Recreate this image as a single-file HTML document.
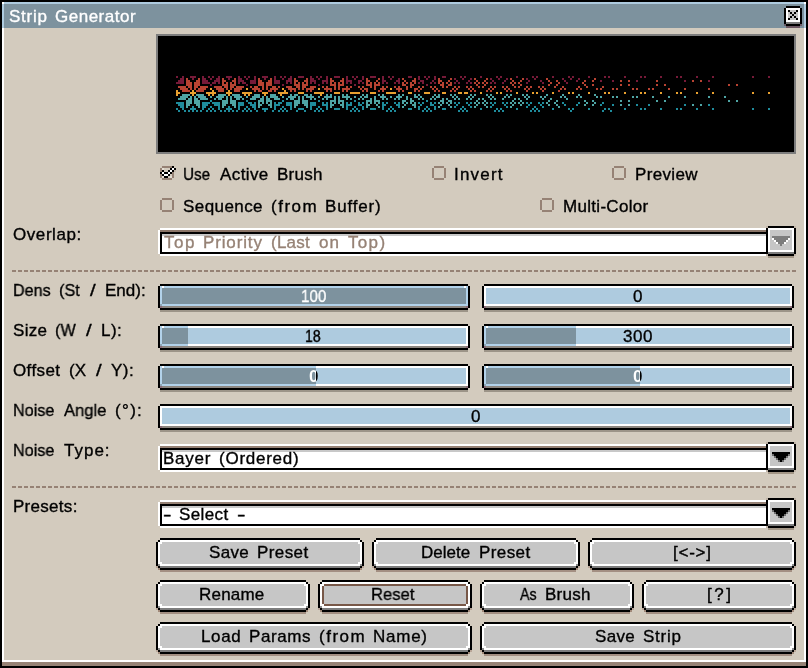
<!DOCTYPE html>
<html lang="en"><head><meta charset="utf-8"><title>Strip Generator</title>
<style>
html,body{margin:0;padding:0;background:#000;width:808px;height:668px;overflow:hidden}
#w{position:relative;width:808px;height:668px;background:#000;overflow:hidden;font-family:"Liberation Sans",sans-serif;font-size:17px;line-height:20px;font-weight:normal}
#w i{position:absolute;display:block}
#w .t,#w .t b{position:absolute;white-space:pre;display:block;font-weight:inherit;transform-origin:0 0;-webkit-text-stroke:0.35px;will-change:transform}
#w .split{color:transparent;-webkit-background-clip:text;background-clip:text;-webkit-text-stroke:0;font-weight:bold}
#w svg.strip{position:absolute;left:0;top:0}
#w .clip{position:absolute;overflow:hidden}
#w .sep{background:repeating-linear-gradient(90deg,#968275 0,#968275 4px,transparent 4px,transparent 6px)}
</style></head>
<body><div id="w">
<i style="left:2px;top:2px;width:804px;height:2px;background:#aecbdf"></i><i style="left:2px;top:4px;width:2px;height:24px;background:#aecbdf"></i><i style="left:804px;top:4px;width:2px;height:24px;background:#aecbdf"></i><i style="left:2px;top:2px;width:2px;height:2px;background:#fff"></i><i style="left:804px;top:2px;width:2px;height:2px;background:#fff"></i><i style="left:4px;top:4px;width:800px;height:24px;background:#7d929e"></i><i style="left:2px;top:28px;width:804px;height:634px;background:#fff"></i><i style="left:4px;top:28px;width:800px;height:632px;background:#d3cbbe"></i><i style="left:2px;top:662px;width:804px;height:4px;background:#968275"></i><div class="titlebar"><span class="t " style="left:0;top:0;color:#fff"><b style="left:9.00px;top:7px;letter-spacing:0.750px">Strip</b> <b style="left:55.00px;top:7px;letter-spacing:0.500px">Generator</b></span><i style="left:786px;top:6px;width:14px;height:2px;background:#000"></i><i style="left:784px;top:8px;width:2px;height:16px;background:#000"></i><i style="left:800px;top:8px;width:2px;height:16px;background:#000"></i><i style="left:786px;top:24px;width:14px;height:2px;background:#000"></i><i style="left:784px;top:24px;width:2px;height:2px;background:#6d5d68"></i><i style="left:800px;top:24px;width:2px;height:2px;background:#6d5d68"></i><i style="left:786px;top:26px;width:14px;height:2px;background:#6a5560"></i><i style="left:786px;top:8px;width:14px;height:14px;background:#fff"></i><i style="left:788px;top:10px;width:10px;height:10px;background:#c6c6c6"></i><i style="left:786px;top:22px;width:14px;height:2px;background:#7d7d7d"></i><i style="left:788px;top:10px;width:2px;height:2px;background:#000"></i><i style="left:796px;top:10px;width:2px;height:2px;background:#000"></i><i style="left:790px;top:12px;width:2px;height:2px;background:#000"></i><i style="left:794px;top:12px;width:2px;height:2px;background:#000"></i><i style="left:792px;top:14px;width:2px;height:2px;background:#000"></i><i style="left:794px;top:16px;width:2px;height:2px;background:#000"></i><i style="left:790px;top:16px;width:2px;height:2px;background:#000"></i><i style="left:796px;top:18px;width:2px;height:2px;background:#000"></i><i style="left:788px;top:18px;width:2px;height:2px;background:#000"></i></div><div class="preview"><i style="left:156px;top:34px;width:640px;height:120px;background:#7d7d7d"></i><i style="left:158px;top:36px;width:636px;height:116px;background:#000"></i><svg class="strip" width="808" height="668" viewBox="0 0 808 668" shape-rendering="crispEdges"><path fill="#761a38" d="M176 76h2v2h-2zM182 76h2v2h-2zM190 76h6v2h-6zM202 76h2v2h-2zM208 76h2v2h-2zM212 76h2v2h-2zM218 76h2v2h-2zM226 76h6v2h-6zM238 76h2v2h-2zM244 76h2v2h-2zM248 76h2v2h-2zM254 76h2v2h-2zM262 76h6v2h-6zM274 76h2v2h-2zM280 76h2v2h-2zM284 76h2v2h-2zM290 76h2v2h-2zM298 76h6v2h-6zM310 76h2v2h-2zM316 76h2v2h-2zM320 76h2v2h-2zM326 76h2v2h-2zM334 76h6v2h-6zM346 76h2v2h-2zM352 76h2v2h-2zM356 76h2v2h-2zM362 76h2v2h-2zM370 76h6v2h-6zM382 76h2v2h-2zM388 76h2v2h-2zM392 76h2v2h-2zM408 76h4v2h-4zM418 76h2v2h-2zM424 76h2v2h-2zM428 76h2v2h-2zM434 76h2v2h-2zM442 76h4v2h-4zM460 76h2v2h-2zM464 76h2v2h-2zM480 76h2v2h-2zM496 76h2v2h-2zM500 76h2v2h-2zM516 76h2v2h-2zM532 76h2v2h-2zM536 76h2v2h-2zM552 76h2v2h-2zM568 76h2v2h-2zM572 76h2v2h-2zM588 76h2v2h-2zM604 76h2v2h-2zM608 76h2v2h-2zM624 76h2v2h-2zM640 76h2v2h-2zM644 76h2v2h-2zM660 76h2v2h-2zM676 76h2v2h-2zM680 76h2v2h-2zM696 76h2v2h-2zM712 76h2v2h-2zM752 76h2v2h-2zM768 76h2v2h-2zM180 78h4v2h-4zM192 78h2v2h-2zM202 78h4v2h-4zM210 78h2v2h-2zM216 78h4v2h-4zM228 78h2v2h-2zM238 78h4v2h-4zM246 78h2v2h-2zM254 78h2v2h-2zM264 78h2v2h-2zM274 78h2v2h-2zM282 78h2v2h-2zM288 78h4v2h-4zM310 78h4v2h-4zM318 78h2v2h-2zM326 78h2v2h-2zM346 78h2v2h-2zM354 78h2v2h-2zM362 78h2v2h-2zM382 78h2v2h-2zM390 78h2v2h-2zM398 78h2v2h-2zM418 78h2v2h-2zM426 78h2v2h-2zM434 78h2v2h-2zM454 78h2v2h-2zM462 78h2v2h-2zM470 78h2v2h-2zM490 78h2v2h-2zM498 78h2v2h-2zM506 78h2v2h-2zM526 78h2v2h-2zM534 78h2v2h-2zM562 78h2v2h-2zM570 78h2v2h-2zM578 78h2v2h-2zM178 80h6v2h-6zM202 80h6v2h-6zM214 80h6v2h-6zM238 80h6v2h-6zM250 80h6v2h-6zM274 80h6v2h-6zM286 80h6v2h-6zM310 80h6v2h-6zM322 80h6v2h-6zM346 80h6v2h-6zM358 80h4v2h-4zM382 80h4v2h-4zM396 80h4v2h-4zM420 80h4v2h-4zM432 80h2v2h-2zM456 80h2v2h-2zM468 80h2v2h-2zM492 80h2v2h-2zM504 80h2v2h-2zM528 80h2v2h-2zM540 80h2v2h-2zM564 80h2v2h-2zM576 80h2v2h-2zM600 80h2v2h-2zM612 80h2v2h-2zM636 80h2v2h-2zM684 80h2v2h-2zM708 80h2v2h-2zM176 82h8v2h-8zM202 82h8v2h-8zM212 82h4v2h-4zM218 82h2v2h-2zM238 82h2v2h-2zM242 82h4v2h-4zM250 82h6v2h-6zM274 82h6v2h-6zM286 82h2v2h-2zM290 82h2v2h-2zM310 82h2v2h-2zM314 82h2v2h-2zM322 82h2v2h-2zM326 82h2v2h-2zM346 82h2v2h-2zM350 82h2v2h-2zM358 82h2v2h-2zM362 82h2v2h-2zM382 82h2v2h-2zM386 82h2v2h-2zM394 82h2v2h-2zM398 82h2v2h-2zM418 82h2v2h-2zM422 82h2v2h-2zM430 82h2v2h-2zM434 82h2v2h-2zM454 82h2v2h-2zM458 82h2v2h-2zM466 82h2v2h-2zM470 82h2v2h-2zM490 82h2v2h-2zM494 82h2v2h-2zM502 82h2v2h-2zM526 82h2v2h-2zM542 82h2v2h-2zM566 82h2v2h-2zM210 84h2v2h-2zM246 84h2v2h-2zM282 84h2v2h-2zM318 84h2v2h-2zM354 84h2v2h-2zM426 84h2v2h-2z"/><path fill="#b84332" d="M186 78h2v2h-2zM198 78h2v2h-2zM222 78h2v2h-2zM234 78h2v2h-2zM258 78h2v2h-2zM270 78h2v2h-2zM294 78h2v2h-2zM306 78h2v2h-2zM330 78h2v2h-2zM342 78h2v2h-2zM366 78h2v2h-2zM378 78h2v2h-2zM402 78h2v2h-2zM414 78h2v2h-2zM438 78h2v2h-2zM450 78h2v2h-2zM474 78h2v2h-2zM486 78h2v2h-2zM510 78h2v2h-2zM522 78h2v2h-2zM546 78h2v2h-2zM594 78h2v2h-2zM186 80h4v2h-4zM196 80h4v2h-4zM222 80h4v2h-4zM232 80h4v2h-4zM258 80h4v2h-4zM268 80h4v2h-4zM294 80h4v2h-4zM304 80h4v2h-4zM330 80h4v2h-4zM340 80h4v2h-4zM366 80h4v2h-4zM376 80h2v2h-2zM404 80h2v2h-2zM412 80h4v2h-4zM438 80h4v2h-4zM448 80h2v2h-2zM476 80h2v2h-2zM484 80h2v2h-2zM512 80h2v2h-2zM520 80h2v2h-2zM548 80h2v2h-2zM556 80h2v2h-2zM584 80h2v2h-2zM592 80h2v2h-2zM620 80h2v2h-2zM628 80h2v2h-2zM656 80h2v2h-2zM692 80h2v2h-2zM700 80h2v2h-2zM186 82h6v2h-6zM194 82h6v2h-6zM222 82h2v2h-2zM226 82h2v2h-2zM230 82h2v2h-2zM234 82h2v2h-2zM258 82h6v2h-6zM266 82h6v2h-6zM294 82h2v2h-2zM298 82h2v2h-2zM302 82h2v2h-2zM306 82h2v2h-2zM330 82h2v2h-2zM334 82h2v2h-2zM338 82h2v2h-2zM342 82h2v2h-2zM366 82h2v2h-2zM370 82h2v2h-2zM374 82h2v2h-2zM378 82h2v2h-2zM402 82h2v2h-2zM406 82h2v2h-2zM410 82h2v2h-2zM414 82h2v2h-2zM438 82h2v2h-2zM442 82h2v2h-2zM446 82h2v2h-2zM450 82h2v2h-2zM474 82h2v2h-2zM478 82h2v2h-2zM482 82h2v2h-2zM486 82h2v2h-2zM510 82h2v2h-2zM514 82h2v2h-2zM518 82h2v2h-2zM550 82h2v2h-2zM558 82h2v2h-2zM582 82h2v2h-2zM186 84h6v2h-6zM194 84h6v2h-6zM222 84h6v2h-6zM230 84h6v2h-6zM258 84h6v2h-6zM266 84h6v2h-6zM294 84h6v2h-6zM302 84h6v2h-6zM330 84h6v2h-6zM338 84h6v2h-6zM366 84h6v2h-6zM374 84h6v2h-6zM402 84h4v2h-4zM410 84h4v2h-4zM440 84h4v2h-4zM448 84h4v2h-4zM476 84h2v2h-2zM484 84h2v2h-2zM512 84h2v2h-2zM520 84h2v2h-2zM548 84h2v2h-2zM556 84h2v2h-2zM584 84h2v2h-2zM592 84h2v2h-2zM620 84h2v2h-2zM628 84h2v2h-2zM656 84h2v2h-2zM664 84h2v2h-2zM728 84h2v2h-2zM736 84h2v2h-2zM178 86h8v2h-8zM188 86h4v2h-4zM194 86h4v2h-4zM200 86h8v2h-8zM214 86h8v2h-8zM224 86h4v2h-4zM230 86h4v2h-4zM236 86h8v2h-8zM250 86h2v2h-2zM254 86h4v2h-4zM262 86h2v2h-2zM266 86h2v2h-2zM272 86h4v2h-4zM278 86h2v2h-2zM286 86h6v2h-6zM296 86h4v2h-4zM302 86h4v2h-4zM310 86h6v2h-6zM322 86h2v2h-2zM326 86h2v2h-2zM334 86h2v2h-2zM338 86h2v2h-2zM346 86h2v2h-2zM350 86h2v2h-2zM358 86h2v2h-2zM362 86h2v2h-2zM370 86h2v2h-2zM374 86h2v2h-2zM382 86h2v2h-2zM386 86h2v2h-2zM394 86h2v2h-2zM398 86h2v2h-2zM406 86h2v2h-2zM410 86h2v2h-2zM418 86h2v2h-2zM422 86h2v2h-2zM430 86h2v2h-2zM434 86h2v2h-2zM442 86h2v2h-2zM446 86h2v2h-2zM454 86h2v2h-2zM458 86h2v2h-2zM466 86h2v2h-2zM470 86h2v2h-2zM478 86h2v2h-2zM482 86h2v2h-2zM490 86h2v2h-2zM494 86h2v2h-2zM502 86h2v2h-2zM506 86h2v2h-2zM514 86h2v2h-2zM518 86h2v2h-2zM526 86h2v2h-2zM530 86h2v2h-2zM538 86h2v2h-2zM542 86h2v2h-2zM554 86h2v2h-2zM562 86h2v2h-2zM578 86h2v2h-2zM586 86h2v2h-2zM602 86h2v2h-2zM180 88h8v2h-8zM190 88h2v2h-2zM194 88h2v2h-2zM198 88h8v2h-8zM216 88h8v2h-8zM226 88h2v2h-2zM230 88h2v2h-2zM234 88h8v2h-8zM252 88h8v2h-8zM262 88h2v2h-2zM266 88h2v2h-2zM270 88h8v2h-8zM288 88h8v2h-8zM298 88h2v2h-2zM302 88h2v2h-2zM306 88h8v2h-8zM324 88h8v2h-8zM334 88h2v2h-2zM338 88h2v2h-2zM342 88h8v2h-8zM360 88h2v2h-2zM364 88h4v2h-4zM374 88h2v2h-2zM380 88h6v2h-6zM396 88h6v2h-6zM406 88h2v2h-2zM414 88h4v2h-4zM420 88h2v2h-2zM432 88h2v2h-2zM436 88h2v2h-2zM452 88h2v2h-2zM456 88h2v2h-2zM468 88h2v2h-2zM472 88h2v2h-2zM488 88h2v2h-2zM492 88h2v2h-2zM504 88h2v2h-2zM508 88h2v2h-2zM524 88h2v2h-2zM528 88h2v2h-2zM540 88h2v2h-2zM544 88h2v2h-2zM560 88h2v2h-2zM564 88h2v2h-2zM576 88h2v2h-2zM580 88h2v2h-2zM596 88h2v2h-2zM600 88h2v2h-2zM612 88h2v2h-2zM616 88h2v2h-2zM632 88h2v2h-2zM636 88h2v2h-2zM648 88h2v2h-2zM652 88h2v2h-2zM668 88h2v2h-2zM684 88h2v2h-2zM708 88h2v2h-2zM182 90h8v2h-8zM196 90h8v2h-8zM218 90h6v2h-6zM234 90h6v2h-6zM254 90h2v2h-2zM258 90h4v2h-4zM268 90h4v2h-4zM274 90h2v2h-2zM290 90h2v2h-2zM294 90h2v2h-2zM306 90h2v2h-2zM310 90h2v2h-2zM326 90h2v2h-2zM330 90h2v2h-2zM342 90h2v2h-2zM346 90h2v2h-2zM362 90h2v2h-2zM366 90h2v2h-2zM378 90h2v2h-2zM382 90h2v2h-2zM398 90h2v2h-2zM402 90h2v2h-2zM414 90h2v2h-2zM418 90h2v2h-2zM434 90h2v2h-2zM438 90h2v2h-2zM450 90h2v2h-2zM454 90h2v2h-2zM470 90h2v2h-2zM474 90h2v2h-2zM486 90h2v2h-2zM490 90h2v2h-2zM506 90h2v2h-2zM510 90h2v2h-2zM526 90h2v2h-2zM542 90h2v2h-2zM558 90h2v2h-2z"/><path fill="#e8a030" d="M210 88h2v2h-2zM246 88h2v2h-2zM282 88h2v2h-2zM318 88h2v2h-2zM390 88h2v2h-2zM176 90h2v2h-2zM192 90h2v2h-2zM212 90h2v2h-2zM228 90h2v2h-2zM284 90h2v2h-2zM176 92h4v2h-4zM190 92h6v2h-6zM206 92h10v2h-10zM226 92h6v2h-6zM242 92h10v2h-10zM262 92h6v2h-6zM278 92h10v2h-10zM298 92h6v2h-6zM314 92h10v2h-10zM334 92h6v2h-6zM350 92h10v2h-10zM370 92h6v2h-6zM386 92h10v2h-10zM408 92h4v2h-4zM424 92h6v2h-6zM442 92h4v2h-4zM458 92h4v2h-4zM464 92h4v2h-4zM480 92h2v2h-2zM496 92h2v2h-2zM500 92h2v2h-2zM516 92h2v2h-2zM532 92h2v2h-2zM536 92h2v2h-2zM552 92h2v2h-2zM568 92h2v2h-2zM572 92h2v2h-2zM588 92h2v2h-2zM604 92h2v2h-2zM608 92h2v2h-2zM624 92h2v2h-2zM640 92h2v2h-2zM644 92h2v2h-2zM660 92h2v2h-2zM676 92h2v2h-2zM680 92h2v2h-2zM696 92h2v2h-2zM712 92h2v2h-2zM752 92h2v2h-2zM768 92h2v2h-2zM176 94h2v2h-2zM192 94h2v2h-2zM208 94h2v2h-2zM212 94h2v2h-2zM228 94h2v2h-2zM244 94h2v2h-2zM248 94h2v2h-2zM264 94h2v2h-2zM280 94h2v2h-2zM320 94h2v2h-2z"/><path fill="#4fa5a5" d="M182 94h8v2h-8zM196 94h8v2h-8zM218 94h8v2h-8zM232 94h8v2h-8zM254 94h6v2h-6zM270 94h6v2h-6zM290 94h2v2h-2zM294 94h4v2h-4zM304 94h4v2h-4zM310 94h2v2h-2zM326 94h2v2h-2zM330 94h2v2h-2zM342 94h2v2h-2zM346 94h2v2h-2zM362 94h2v2h-2zM366 94h2v2h-2zM378 94h2v2h-2zM382 94h2v2h-2zM398 94h2v2h-2zM402 94h2v2h-2zM414 94h2v2h-2zM418 94h2v2h-2zM434 94h2v2h-2zM438 94h2v2h-2zM450 94h2v2h-2zM454 94h2v2h-2zM470 94h2v2h-2zM474 94h2v2h-2zM486 94h2v2h-2zM490 94h2v2h-2zM506 94h2v2h-2zM510 94h2v2h-2zM522 94h2v2h-2zM526 94h2v2h-2zM546 94h2v2h-2zM562 94h2v2h-2zM578 94h2v2h-2zM594 94h2v2h-2zM180 96h8v2h-8zM190 96h2v2h-2zM194 96h2v2h-2zM198 96h8v2h-8zM210 96h2v2h-2zM216 96h8v2h-8zM226 96h2v2h-2zM230 96h2v2h-2zM234 96h8v2h-8zM246 96h2v2h-2zM252 96h8v2h-8zM262 96h2v2h-2zM266 96h2v2h-2zM270 96h8v2h-8zM282 96h2v2h-2zM288 96h8v2h-8zM298 96h2v2h-2zM302 96h2v2h-2zM306 96h8v2h-8zM318 96h2v2h-2zM324 96h8v2h-8zM334 96h2v2h-2zM338 96h2v2h-2zM342 96h8v2h-8zM354 96h2v2h-2zM360 96h2v2h-2zM364 96h4v2h-4zM374 96h2v2h-2zM380 96h6v2h-6zM390 96h2v2h-2zM396 96h6v2h-6zM406 96h2v2h-2zM414 96h4v2h-4zM420 96h2v2h-2zM432 96h2v2h-2zM436 96h4v2h-4zM452 96h2v2h-2zM456 96h2v2h-2zM468 96h2v2h-2zM472 96h2v2h-2zM488 96h2v2h-2zM492 96h2v2h-2zM504 96h2v2h-2zM508 96h2v2h-2zM524 96h2v2h-2zM528 96h2v2h-2zM540 96h2v2h-2zM544 96h2v2h-2zM560 96h2v2h-2zM564 96h2v2h-2zM576 96h2v2h-2zM580 96h2v2h-2zM596 96h2v2h-2zM600 96h2v2h-2zM612 96h2v2h-2zM616 96h2v2h-2zM632 96h2v2h-2zM636 96h2v2h-2zM652 96h2v2h-2zM668 96h2v2h-2zM684 96h2v2h-2zM708 96h2v2h-2zM724 96h2v2h-2zM178 98h8v2h-8zM188 98h4v2h-4zM194 98h4v2h-4zM200 98h8v2h-8zM214 98h2v2h-2zM218 98h4v2h-4zM226 98h2v2h-2zM230 98h2v2h-2zM236 98h4v2h-4zM242 98h2v2h-2zM250 98h6v2h-6zM260 98h4v2h-4zM266 98h4v2h-4zM274 98h6v2h-6zM286 98h2v2h-2zM290 98h4v2h-4zM298 98h2v2h-2zM302 98h2v2h-2zM310 98h2v2h-2zM314 98h2v2h-2zM322 98h2v2h-2zM326 98h2v2h-2zM334 98h2v2h-2zM338 98h2v2h-2zM346 98h2v2h-2zM350 98h2v2h-2zM358 98h2v2h-2zM362 98h2v2h-2zM370 98h2v2h-2zM374 98h2v2h-2zM382 98h2v2h-2zM386 98h2v2h-2zM394 98h2v2h-2zM398 98h2v2h-2zM406 98h2v2h-2zM410 98h2v2h-2zM418 98h2v2h-2zM422 98h2v2h-2zM430 98h2v2h-2zM434 98h2v2h-2zM442 98h2v2h-2zM446 98h2v2h-2zM454 98h2v2h-2zM458 98h2v2h-2zM466 98h2v2h-2zM470 98h2v2h-2zM478 98h2v2h-2zM482 98h2v2h-2zM490 98h2v2h-2zM494 98h2v2h-2zM502 98h2v2h-2zM514 98h2v2h-2zM518 98h2v2h-2zM526 98h2v2h-2zM542 98h2v2h-2zM550 98h2v2h-2zM566 98h2v2h-2zM186 100h6v2h-6zM194 100h6v2h-6zM222 100h6v2h-6zM230 100h6v2h-6zM258 100h6v2h-6zM266 100h6v2h-6zM294 100h6v2h-6zM302 100h6v2h-6zM330 100h6v2h-6zM338 100h6v2h-6zM366 100h6v2h-6zM374 100h6v2h-6zM402 100h4v2h-4zM410 100h4v2h-4zM440 100h4v2h-4zM448 100h4v2h-4zM476 100h2v2h-2zM484 100h2v2h-2zM512 100h2v2h-2zM520 100h2v2h-2zM548 100h2v2h-2zM556 100h2v2h-2zM584 100h2v2h-2zM592 100h2v2h-2zM620 100h2v2h-2zM628 100h2v2h-2zM656 100h2v2h-2zM664 100h2v2h-2zM728 100h2v2h-2zM736 100h2v2h-2zM186 102h6v2h-6zM194 102h6v2h-6zM222 102h6v2h-6zM230 102h6v2h-6zM258 102h2v2h-2zM262 102h2v2h-2zM266 102h2v2h-2zM270 102h2v2h-2zM294 102h6v2h-6zM302 102h6v2h-6zM330 102h2v2h-2zM334 102h2v2h-2zM338 102h2v2h-2zM342 102h2v2h-2zM366 102h2v2h-2zM370 102h2v2h-2zM374 102h2v2h-2zM378 102h2v2h-2zM402 102h2v2h-2zM406 102h2v2h-2zM410 102h2v2h-2zM414 102h2v2h-2zM438 102h2v2h-2zM442 102h2v2h-2zM446 102h2v2h-2zM450 102h2v2h-2zM474 102h2v2h-2zM478 102h2v2h-2zM482 102h2v2h-2zM486 102h2v2h-2zM510 102h2v2h-2zM514 102h2v2h-2zM518 102h2v2h-2zM522 102h2v2h-2zM546 102h2v2h-2zM554 102h2v2h-2zM586 102h2v2h-2zM594 102h2v2h-2zM186 104h4v2h-4zM196 104h4v2h-4zM222 104h4v2h-4zM232 104h4v2h-4zM258 104h4v2h-4zM268 104h4v2h-4zM294 104h4v2h-4zM304 104h4v2h-4zM330 104h4v2h-4zM340 104h4v2h-4zM366 104h4v2h-4zM376 104h2v2h-2zM404 104h2v2h-2zM412 104h4v2h-4zM440 104h2v2h-2zM448 104h2v2h-2zM476 104h2v2h-2zM484 104h2v2h-2zM512 104h2v2h-2zM520 104h2v2h-2zM548 104h2v2h-2zM556 104h2v2h-2zM584 104h2v2h-2zM592 104h2v2h-2zM620 104h2v2h-2zM628 104h2v2h-2zM692 104h2v2h-2zM700 104h2v2h-2zM186 106h2v2h-2zM198 106h2v2h-2zM222 106h2v2h-2zM234 106h2v2h-2zM258 106h2v2h-2zM270 106h2v2h-2zM294 106h2v2h-2zM306 106h2v2h-2zM330 106h2v2h-2zM342 106h2v2h-2zM366 106h2v2h-2zM378 106h2v2h-2zM402 106h2v2h-2zM414 106h2v2h-2zM438 106h2v2h-2zM450 106h2v2h-2zM474 106h2v2h-2zM486 106h2v2h-2zM510 106h2v2h-2zM558 106h2v2h-2z"/><path fill="#1f8c9c" d="M210 100h2v2h-2zM246 100h2v2h-2zM282 100h2v2h-2zM318 100h2v2h-2zM354 100h2v2h-2zM426 100h2v2h-2zM176 102h8v2h-8zM202 102h8v2h-8zM212 102h8v2h-8zM238 102h6v2h-6zM248 102h4v2h-4zM254 102h2v2h-2zM274 102h2v2h-2zM278 102h4v2h-4zM286 102h6v2h-6zM310 102h6v2h-6zM322 102h2v2h-2zM326 102h2v2h-2zM346 102h2v2h-2zM350 102h2v2h-2zM358 102h2v2h-2zM362 102h2v2h-2zM382 102h2v2h-2zM386 102h2v2h-2zM394 102h2v2h-2zM398 102h2v2h-2zM418 102h2v2h-2zM422 102h2v2h-2zM430 102h2v2h-2zM434 102h2v2h-2zM454 102h2v2h-2zM458 102h2v2h-2zM466 102h2v2h-2zM470 102h2v2h-2zM490 102h2v2h-2zM494 102h2v2h-2zM502 102h2v2h-2zM506 102h2v2h-2zM526 102h2v2h-2zM530 102h2v2h-2zM538 102h2v2h-2zM542 102h2v2h-2zM562 102h2v2h-2zM578 102h2v2h-2zM602 102h2v2h-2zM178 104h6v2h-6zM202 104h6v2h-6zM214 104h6v2h-6zM238 104h6v2h-6zM250 104h6v2h-6zM274 104h6v2h-6zM286 104h6v2h-6zM310 104h6v2h-6zM322 104h6v2h-6zM346 104h6v2h-6zM358 104h4v2h-4zM382 104h4v2h-4zM396 104h4v2h-4zM420 104h2v2h-2zM430 104h4v2h-4zM456 104h2v2h-2zM468 104h2v2h-2zM492 104h2v2h-2zM504 104h2v2h-2zM528 104h2v2h-2zM540 104h2v2h-2zM564 104h2v2h-2zM576 104h2v2h-2zM600 104h2v2h-2zM612 104h2v2h-2zM636 104h2v2h-2zM648 104h2v2h-2zM684 104h2v2h-2zM708 104h2v2h-2zM180 106h4v2h-4zM192 106h2v2h-2zM202 106h4v2h-4zM210 106h2v2h-2zM218 106h2v2h-2zM228 106h2v2h-2zM238 106h2v2h-2zM246 106h2v2h-2zM252 106h4v2h-4zM274 106h2v2h-2zM282 106h2v2h-2zM290 106h2v2h-2zM310 106h2v2h-2zM318 106h2v2h-2zM326 106h2v2h-2zM346 106h2v2h-2zM354 106h2v2h-2zM362 106h2v2h-2zM382 106h2v2h-2zM390 106h2v2h-2zM398 106h2v2h-2zM418 106h2v2h-2zM426 106h2v2h-2zM434 106h2v2h-2zM454 106h2v2h-2zM462 106h2v2h-2zM470 106h2v2h-2zM490 106h2v2h-2zM506 106h2v2h-2zM526 106h2v2h-2zM534 106h2v2h-2zM542 106h2v2h-2zM176 108h2v2h-2zM182 108h2v2h-2zM190 108h6v2h-6zM202 108h2v2h-2zM208 108h2v2h-2zM212 108h2v2h-2zM218 108h2v2h-2zM226 108h6v2h-6zM238 108h2v2h-2zM244 108h2v2h-2zM248 108h2v2h-2zM254 108h2v2h-2zM262 108h6v2h-6zM274 108h2v2h-2zM280 108h2v2h-2zM284 108h2v2h-2zM290 108h2v2h-2zM298 108h6v2h-6zM310 108h2v2h-2zM316 108h2v2h-2zM320 108h2v2h-2zM326 108h2v2h-2zM334 108h6v2h-6zM346 108h2v2h-2zM352 108h2v2h-2zM356 108h2v2h-2zM362 108h2v2h-2zM370 108h6v2h-6zM382 108h2v2h-2zM388 108h2v2h-2zM392 108h2v2h-2zM408 108h4v2h-4zM418 108h2v2h-2zM424 108h2v2h-2zM428 108h2v2h-2zM434 108h2v2h-2zM442 108h4v2h-4zM460 108h2v2h-2zM464 108h2v2h-2zM480 108h2v2h-2zM496 108h2v2h-2zM500 108h2v2h-2zM516 108h2v2h-2zM532 108h2v2h-2zM536 108h2v2h-2zM552 108h2v2h-2zM568 108h2v2h-2zM572 108h2v2h-2zM588 108h2v2h-2zM604 108h2v2h-2zM608 108h2v2h-2zM624 108h2v2h-2zM640 108h2v2h-2zM644 108h2v2h-2zM660 108h2v2h-2zM676 108h2v2h-2zM680 108h2v2h-2zM696 108h2v2h-2zM712 108h2v2h-2zM752 108h2v2h-2zM768 108h2v2h-2zM178 110h2v2h-2zM184 110h2v2h-2zM188 110h2v2h-2zM192 110h2v2h-2zM196 110h2v2h-2zM200 110h2v2h-2zM206 110h2v2h-2zM210 110h2v2h-2zM214 110h2v2h-2zM220 110h2v2h-2zM224 110h2v2h-2zM228 110h2v2h-2zM232 110h2v2h-2zM236 110h2v2h-2zM242 110h2v2h-2zM246 110h2v2h-2zM250 110h2v2h-2zM256 110h2v2h-2zM264 110h2v2h-2zM272 110h2v2h-2zM278 110h2v2h-2zM282 110h2v2h-2zM286 110h2v2h-2zM296 110h2v2h-2zM304 110h2v2h-2zM314 110h2v2h-2zM318 110h2v2h-2zM322 110h2v2h-2zM350 110h2v2h-2zM354 110h2v2h-2zM358 110h2v2h-2zM386 110h2v2h-2zM390 110h2v2h-2zM394 110h2v2h-2zM422 110h2v2h-2zM426 110h2v2h-2zM430 110h2v2h-2zM458 110h2v2h-2zM462 110h2v2h-2zM466 110h2v2h-2zM494 110h2v2h-2zM498 110h2v2h-2zM502 110h2v2h-2zM530 110h2v2h-2zM534 110h2v2h-2zM538 110h2v2h-2zM570 110h2v2h-2zM602 110h2v2h-2zM610 110h2v2h-2z"/></svg></div><div class="check"><i style="left:162px;top:166px;width:10px;height:2px;background:#968275"></i><i style="left:162px;top:178px;width:10px;height:2px;background:#968275"></i><i style="left:160px;top:168px;width:2px;height:10px;background:#968275"></i><i style="left:172px;top:168px;width:2px;height:10px;background:#968275"></i><i style="left:162px;top:168px;width:2px;height:2px;background:#e6dfd4"></i><i style="left:170px;top:168px;width:2px;height:2px;background:#e6dfd4"></i><i style="left:162px;top:176px;width:2px;height:2px;background:#e6dfd4"></i><i style="left:170px;top:176px;width:2px;height:2px;background:#e6dfd4"></i><i style="left:174px;top:170px;width:2px;height:2px;background:#c4b6a8"></i><i style="left:172px;top:166px;width:2px;height:2px;background:#000"></i><i style="left:170px;top:168px;width:2px;height:2px;background:#000"></i><i style="left:174px;top:168px;width:2px;height:2px;background:#000"></i><i style="left:162px;top:170px;width:2px;height:2px;background:#000"></i><i style="left:168px;top:170px;width:2px;height:2px;background:#000"></i><i style="left:172px;top:170px;width:2px;height:2px;background:#000"></i><i style="left:160px;top:172px;width:2px;height:2px;background:#000"></i><i style="left:164px;top:172px;width:2px;height:2px;background:#000"></i><i style="left:166px;top:172px;width:2px;height:2px;background:#000"></i><i style="left:170px;top:172px;width:2px;height:2px;background:#000"></i><i style="left:162px;top:174px;width:2px;height:2px;background:#000"></i><i style="left:168px;top:174px;width:2px;height:2px;background:#000"></i><i style="left:164px;top:176px;width:2px;height:2px;background:#000"></i><i style="left:166px;top:176px;width:2px;height:2px;background:#000"></i><i style="left:172px;top:168px;width:2px;height:2px;background:#fff"></i><i style="left:170px;top:170px;width:2px;height:2px;background:#fff"></i><i style="left:162px;top:172px;width:2px;height:2px;background:#fff"></i><i style="left:168px;top:172px;width:2px;height:2px;background:#fff"></i><i style="left:164px;top:174px;width:2px;height:2px;background:#fff"></i><i style="left:166px;top:174px;width:2px;height:2px;background:#fff"></i><span class="t " style="left:0;top:0;color:#000"><b style="left:183.10px;top:165px;transform:scaleX(0.8966)">Use</b> <b style="left:220.00px;top:165px;letter-spacing:0.400px">Active</b> <b style="left:277.00px;top:165px;letter-spacing:0.250px">Brush</b></span></div><div class="check"><i style="left:434px;top:166px;width:10px;height:2px;background:#968275"></i><i style="left:434px;top:178px;width:10px;height:2px;background:#968275"></i><i style="left:432px;top:168px;width:2px;height:10px;background:#968275"></i><i style="left:444px;top:168px;width:2px;height:10px;background:#968275"></i><span class="t " style="left:454.00px;top:165px;letter-spacing:1.200px;color:#000">Invert</span></div><div class="check"><i style="left:614px;top:166px;width:10px;height:2px;background:#968275"></i><i style="left:614px;top:178px;width:10px;height:2px;background:#968275"></i><i style="left:612px;top:168px;width:2px;height:10px;background:#968275"></i><i style="left:624px;top:168px;width:2px;height:10px;background:#968275"></i><span class="t " style="left:635.00px;top:165px;letter-spacing:0.333px;color:#000">Preview</span></div><div class="check"><i style="left:162px;top:198px;width:10px;height:2px;background:#968275"></i><i style="left:162px;top:210px;width:10px;height:2px;background:#968275"></i><i style="left:160px;top:200px;width:2px;height:10px;background:#968275"></i><i style="left:172px;top:200px;width:2px;height:10px;background:#968275"></i><span class="t " style="left:0;top:0;color:#000"><b style="left:183.00px;top:197px;letter-spacing:0.429px">Sequence</b> <b style="left:271.00px;top:197px;letter-spacing:1.500px">(from</b> <b style="left:325.00px;top:197px;letter-spacing:0.833px">Buffer)</b></span></div><div class="check"><i style="left:542px;top:198px;width:10px;height:2px;background:#968275"></i><i style="left:542px;top:210px;width:10px;height:2px;background:#968275"></i><i style="left:540px;top:200px;width:2px;height:10px;background:#968275"></i><i style="left:552px;top:200px;width:2px;height:10px;background:#968275"></i><span class="t " style="left:563.00px;top:197px;letter-spacing:0.300px;color:#000">Multi-Color</span></div><span class="t " style="left:13.00px;top:225px;letter-spacing:0.571px;color:#000">Overlap:</span><div class="combo"><i style="left:160px;top:228px;width:606px;height:2px;background:#fff"></i><i style="left:158px;top:230px;width:2px;height:24px;background:#fff"></i><i style="left:160px;top:254px;width:606px;height:2px;background:#fff"></i><i style="left:160px;top:230px;width:606px;height:2px;background:#8a7568"></i><i style="left:160px;top:232px;width:608px;height:22px;background:#000"></i><i style="left:162px;top:234px;width:604px;height:18px;background:#fff"></i><i style="left:162px;top:234px;width:604px;height:2px;background:#c8c8c8"></i><span class="t " style="left:0;top:0;color:#968275"><b style="left:164.00px;top:233px;letter-spacing:1.500px">Top</b> <b style="left:203.00px;top:233px;letter-spacing:0.857px">Priority</b> <b style="left:271.00px;top:233px;letter-spacing:0.250px">(Last</b> <b style="left:319.00px;top:233px;letter-spacing:1.000px">on</b> <b style="left:348.00px;top:233px;letter-spacing:1.333px">Top)</b></span><i style="left:768px;top:226px;width:26px;height:2px;background:#000"></i><i style="left:766px;top:228px;width:2px;height:26px;background:#000"></i><i style="left:794px;top:228px;width:2px;height:26px;background:#000"></i><i style="left:768px;top:254px;width:26px;height:2px;background:#000"></i><i style="left:768px;top:256px;width:26px;height:2px;background:#a39686"></i><i style="left:766px;top:226px;width:2px;height:2px;background:#bfb3a6"></i><i style="left:794px;top:226px;width:2px;height:2px;background:#bfb3a6"></i><i style="left:766px;top:254px;width:2px;height:2px;background:#bfb3a6"></i><i style="left:794px;top:254px;width:2px;height:2px;background:#bfb3a6"></i><i style="left:768px;top:228px;width:26px;height:24px;background:#fff"></i><i style="left:770px;top:230px;width:22px;height:20px;background:#c6c6c6"></i><i style="left:768px;top:252px;width:26px;height:2px;background:#7d7d7d"></i><i style="left:772px;top:236px;width:18px;height:2px;background:#7d7d7d"></i><i style="left:774px;top:238px;width:14px;height:2px;background:#7d7d7d"></i><i style="left:772px;top:238px;width:2px;height:2px;background:#fff"></i><i style="left:788px;top:238px;width:2px;height:2px;background:#fff"></i><i style="left:776px;top:240px;width:10px;height:2px;background:#7d7d7d"></i><i style="left:774px;top:240px;width:2px;height:2px;background:#fff"></i><i style="left:786px;top:240px;width:2px;height:2px;background:#fff"></i><i style="left:778px;top:242px;width:6px;height:2px;background:#7d7d7d"></i><i style="left:776px;top:242px;width:2px;height:2px;background:#fff"></i><i style="left:784px;top:242px;width:2px;height:2px;background:#fff"></i><i style="left:780px;top:244px;width:2px;height:2px;background:#7d7d7d"></i></div><i class="sep" style="left:12px;top:270px;width:784px;height:2px"></i><span class="t " style="left:0;top:0;color:#000"><b style="left:13.05px;top:281px;transform:scaleX(0.9474)">Dens</b> <b style="left:59.05px;top:281px;transform:scaleX(0.9524)">(St</b> <b style="left:90.00px;top:281px;transform:scaleX(1.2000)">/</b> <b style="left:105.00px;top:281px">End):</b></span><div class="slider"><i style="left:160px;top:284px;width:308px;height:2px;background:#000"></i><i style="left:158px;top:286px;width:2px;height:22px;background:#000"></i><i style="left:468px;top:286px;width:2px;height:22px;background:#000"></i><i style="left:160px;top:308px;width:308px;height:2px;background:#000"></i><i style="left:160px;top:310px;width:308px;height:2px;background:#9c9488"></i><i style="left:160px;top:286px;width:308px;height:20px;background:#fff"></i><i style="left:162px;top:288px;width:304px;height:16px;background:#aecbdf"></i><i style="left:160px;top:306px;width:308px;height:2px;background:#8c8680"></i><i style="left:160px;top:286px;width:308px;height:20px;background:#b2d2ea"></i><i style="left:162px;top:288px;width:304px;height:16px;background:#7d929e"></i><i style="left:162px;top:286px;width:2px;height:2px;background:#fff"></i><i style="left:464px;top:286px;width:2px;height:2px;background:#fff"></i><i style="left:160px;top:304px;width:2px;height:2px;background:#8ea7b5"></i><i style="left:160px;top:306px;width:2px;height:2px;background:#8a6a78"></i><i style="left:466px;top:306px;width:2px;height:2px;background:#8a6a78"></i><span class="t " style="left:301.11px;top:287px;transform:scaleX(0.8889);color:#fff">100</span></div><div class="slider"><i style="left:484px;top:284px;width:308px;height:2px;background:#000"></i><i style="left:482px;top:286px;width:2px;height:22px;background:#000"></i><i style="left:792px;top:286px;width:2px;height:22px;background:#000"></i><i style="left:484px;top:308px;width:308px;height:2px;background:#000"></i><i style="left:484px;top:310px;width:308px;height:2px;background:#9c9488"></i><i style="left:484px;top:286px;width:308px;height:20px;background:#fff"></i><i style="left:486px;top:288px;width:304px;height:16px;background:#aecbdf"></i><i style="left:484px;top:306px;width:308px;height:2px;background:#8c8680"></i><i style="left:484px;top:306px;width:2px;height:2px;background:#8a6a78"></i><i style="left:790px;top:306px;width:2px;height:2px;background:#8a6a78"></i><span class="t " style="left:633.00px;top:287px;color:#000">0</span></div><span class="t " style="left:0;top:0;color:#000"><b style="left:13.00px;top:321px;letter-spacing:0.333px">Size</b> <b style="left:55.05px;top:321px;transform:scaleX(0.9524)">(W</b> <b style="left:86.00px;top:321px;transform:scaleX(1.2000)">/</b> <b style="left:101.00px;top:321px;letter-spacing:0.500px">L):</b></span><div class="slider"><i style="left:160px;top:324px;width:308px;height:2px;background:#000"></i><i style="left:158px;top:326px;width:2px;height:22px;background:#000"></i><i style="left:468px;top:326px;width:2px;height:22px;background:#000"></i><i style="left:160px;top:348px;width:308px;height:2px;background:#000"></i><i style="left:160px;top:350px;width:308px;height:2px;background:#9c9488"></i><i style="left:160px;top:326px;width:308px;height:20px;background:#fff"></i><i style="left:162px;top:328px;width:304px;height:16px;background:#aecbdf"></i><i style="left:160px;top:346px;width:308px;height:2px;background:#8c8680"></i><i style="left:160px;top:326px;width:28px;height:20px;background:#b2d2ea"></i><i style="left:162px;top:328px;width:26px;height:16px;background:#7d929e"></i><i style="left:162px;top:326px;width:2px;height:2px;background:#fff"></i><i style="left:160px;top:344px;width:2px;height:2px;background:#8ea7b5"></i><i style="left:160px;top:346px;width:2px;height:2px;background:#8a6a78"></i><i style="left:466px;top:346px;width:2px;height:2px;background:#8a6a78"></i><span class="t " style="left:305.18px;top:327px;transform:scaleX(0.8235);color:#000">18</span></div><div class="slider"><i style="left:484px;top:324px;width:308px;height:2px;background:#000"></i><i style="left:482px;top:326px;width:2px;height:22px;background:#000"></i><i style="left:792px;top:326px;width:2px;height:22px;background:#000"></i><i style="left:484px;top:348px;width:308px;height:2px;background:#000"></i><i style="left:484px;top:350px;width:308px;height:2px;background:#9c9488"></i><i style="left:484px;top:326px;width:308px;height:20px;background:#fff"></i><i style="left:486px;top:328px;width:304px;height:16px;background:#aecbdf"></i><i style="left:484px;top:346px;width:308px;height:2px;background:#8c8680"></i><i style="left:484px;top:326px;width:92px;height:20px;background:#b2d2ea"></i><i style="left:486px;top:328px;width:90px;height:16px;background:#7d929e"></i><i style="left:486px;top:326px;width:2px;height:2px;background:#fff"></i><i style="left:484px;top:344px;width:2px;height:2px;background:#8ea7b5"></i><i style="left:484px;top:346px;width:2px;height:2px;background:#8a6a78"></i><i style="left:790px;top:346px;width:2px;height:2px;background:#8a6a78"></i><span class="t " style="left:623.00px;top:327px;letter-spacing:0.500px;color:#000">300</span></div><span class="t " style="left:0;top:0;color:#000"><b style="left:13.00px;top:361px;letter-spacing:0.400px">Offset</b> <b style="left:69.00px;top:361px">(X</b> <b style="left:96.00px;top:361px;transform:scaleX(1.2000)">/</b> <b style="left:111.00px;top:361px;letter-spacing:0.500px">Y):</b></span><div class="slider"><i style="left:160px;top:364px;width:308px;height:2px;background:#000"></i><i style="left:158px;top:366px;width:2px;height:22px;background:#000"></i><i style="left:468px;top:366px;width:2px;height:22px;background:#000"></i><i style="left:160px;top:388px;width:308px;height:2px;background:#000"></i><i style="left:160px;top:390px;width:308px;height:2px;background:#9c9488"></i><i style="left:160px;top:366px;width:308px;height:20px;background:#fff"></i><i style="left:162px;top:368px;width:304px;height:16px;background:#aecbdf"></i><i style="left:160px;top:386px;width:308px;height:2px;background:#8c8680"></i><i style="left:160px;top:366px;width:156px;height:20px;background:#b2d2ea"></i><i style="left:162px;top:368px;width:154px;height:16px;background:#7d929e"></i><i style="left:162px;top:366px;width:2px;height:2px;background:#fff"></i><i style="left:160px;top:384px;width:2px;height:2px;background:#8ea7b5"></i><i style="left:160px;top:386px;width:2px;height:2px;background:#8a6a78"></i><i style="left:466px;top:386px;width:2px;height:2px;background:#8a6a78"></i><span class="t split" style="left:309.00px;top:367px;background-image:linear-gradient(90deg,#fff 0,#fff 7.00px,#000 7.00px)">0</span></div><div class="slider"><i style="left:484px;top:364px;width:308px;height:2px;background:#000"></i><i style="left:482px;top:366px;width:2px;height:22px;background:#000"></i><i style="left:792px;top:366px;width:2px;height:22px;background:#000"></i><i style="left:484px;top:388px;width:308px;height:2px;background:#000"></i><i style="left:484px;top:390px;width:308px;height:2px;background:#9c9488"></i><i style="left:484px;top:366px;width:308px;height:20px;background:#fff"></i><i style="left:486px;top:368px;width:304px;height:16px;background:#aecbdf"></i><i style="left:484px;top:386px;width:308px;height:2px;background:#8c8680"></i><i style="left:484px;top:366px;width:156px;height:20px;background:#b2d2ea"></i><i style="left:486px;top:368px;width:154px;height:16px;background:#7d929e"></i><i style="left:486px;top:366px;width:2px;height:2px;background:#fff"></i><i style="left:484px;top:384px;width:2px;height:2px;background:#8ea7b5"></i><i style="left:484px;top:386px;width:2px;height:2px;background:#8a6a78"></i><i style="left:790px;top:386px;width:2px;height:2px;background:#8a6a78"></i><span class="t split" style="left:633.00px;top:367px;background-image:linear-gradient(90deg,#fff 0,#fff 7.00px,#000 7.00px)">0</span></div><span class="t " style="left:0;top:0;color:#000"><b style="left:13.05px;top:401px;transform:scaleX(0.9524)">Noise</b> <b style="left:64.00px;top:401px;transform:scaleX(0.9767)">Angle</b> <b style="left:115.00px;top:401px;letter-spacing:1.333px">(°):</b></span><div class="slider"><i style="left:160px;top:404px;width:632px;height:2px;background:#000"></i><i style="left:158px;top:406px;width:2px;height:22px;background:#000"></i><i style="left:792px;top:406px;width:2px;height:22px;background:#000"></i><i style="left:160px;top:428px;width:632px;height:2px;background:#000"></i><i style="left:160px;top:430px;width:632px;height:2px;background:#9c9488"></i><i style="left:160px;top:406px;width:632px;height:20px;background:#fff"></i><i style="left:162px;top:408px;width:628px;height:16px;background:#aecbdf"></i><i style="left:160px;top:426px;width:632px;height:2px;background:#8c8680"></i><i style="left:160px;top:426px;width:2px;height:2px;background:#8a6a78"></i><i style="left:790px;top:426px;width:2px;height:2px;background:#8a6a78"></i><span class="t " style="left:471.00px;top:407px;color:#000">0</span></div><span class="t " style="left:0;top:0;color:#000"><b style="left:13.05px;top:441px;transform:scaleX(0.9524)">Noise</b> <b style="left:64.00px;top:441px;letter-spacing:1.000px">Type:</b></span><div class="combo"><i style="left:160px;top:444px;width:606px;height:2px;background:#fff"></i><i style="left:158px;top:446px;width:2px;height:24px;background:#fff"></i><i style="left:160px;top:470px;width:606px;height:2px;background:#fff"></i><i style="left:160px;top:446px;width:606px;height:2px;background:#968275"></i><i style="left:160px;top:448px;width:608px;height:22px;background:#000"></i><i style="left:162px;top:450px;width:604px;height:18px;background:#fff"></i><i style="left:162px;top:450px;width:604px;height:2px;background:#c8c8c8"></i><span class="t " style="left:0;top:0;color:#000"><b style="left:163.00px;top:449px;letter-spacing:0.750px">Bayer</b> <b style="left:219.00px;top:449px;letter-spacing:0.750px">(Ordered)</b></span><i style="left:768px;top:442px;width:26px;height:2px;background:#000"></i><i style="left:766px;top:444px;width:2px;height:26px;background:#000"></i><i style="left:794px;top:444px;width:2px;height:26px;background:#000"></i><i style="left:768px;top:470px;width:26px;height:2px;background:#000"></i><i style="left:768px;top:472px;width:26px;height:2px;background:#a39686"></i><i style="left:766px;top:442px;width:2px;height:2px;background:#bfb3a6"></i><i style="left:794px;top:442px;width:2px;height:2px;background:#bfb3a6"></i><i style="left:766px;top:470px;width:2px;height:2px;background:#bfb3a6"></i><i style="left:794px;top:470px;width:2px;height:2px;background:#bfb3a6"></i><i style="left:768px;top:444px;width:26px;height:24px;background:#fff"></i><i style="left:770px;top:446px;width:22px;height:20px;background:#c6c6c6"></i><i style="left:768px;top:468px;width:26px;height:2px;background:#7d7d7d"></i><i style="left:772px;top:452px;width:18px;height:2px;background:#000"></i><i style="left:774px;top:454px;width:14px;height:2px;background:#000"></i><i style="left:772px;top:454px;width:2px;height:2px;background:#6e6e6e"></i><i style="left:788px;top:454px;width:2px;height:2px;background:#6e6e6e"></i><i style="left:776px;top:456px;width:10px;height:2px;background:#000"></i><i style="left:774px;top:456px;width:2px;height:2px;background:#6e6e6e"></i><i style="left:786px;top:456px;width:2px;height:2px;background:#6e6e6e"></i><i style="left:778px;top:458px;width:6px;height:2px;background:#000"></i><i style="left:776px;top:458px;width:2px;height:2px;background:#6e6e6e"></i><i style="left:784px;top:458px;width:2px;height:2px;background:#6e6e6e"></i><i style="left:780px;top:460px;width:2px;height:2px;background:#000"></i><i style="left:778px;top:460px;width:2px;height:2px;background:#6e6e6e"></i><i style="left:782px;top:460px;width:2px;height:2px;background:#6e6e6e"></i></div><i class="sep" style="left:12px;top:486px;width:784px;height:2px"></i><span class="t " style="left:13.00px;top:497px;letter-spacing:0.286px;color:#000">Presets:</span><div class="combo"><i style="left:160px;top:500px;width:606px;height:2px;background:#fff"></i><i style="left:158px;top:502px;width:2px;height:24px;background:#fff"></i><i style="left:160px;top:526px;width:606px;height:2px;background:#fff"></i><i style="left:160px;top:502px;width:606px;height:2px;background:#968275"></i><i style="left:160px;top:504px;width:608px;height:22px;background:#000"></i><i style="left:162px;top:506px;width:604px;height:18px;background:#fff"></i><i style="left:162px;top:506px;width:604px;height:2px;background:#c8c8c8"></i><span class="t " style="left:0;top:0;color:#000"><b style="left:162.50px;top:505px;transform:scaleX(1.5000)">-</b> <b style="left:179.00px;top:505px;letter-spacing:0.400px">Select</b> <b style="left:236.50px;top:505px;transform:scaleX(1.5000)">-</b></span><i style="left:768px;top:498px;width:26px;height:2px;background:#000"></i><i style="left:766px;top:500px;width:2px;height:26px;background:#000"></i><i style="left:794px;top:500px;width:2px;height:26px;background:#000"></i><i style="left:768px;top:526px;width:26px;height:2px;background:#000"></i><i style="left:768px;top:528px;width:26px;height:2px;background:#a39686"></i><i style="left:766px;top:498px;width:2px;height:2px;background:#bfb3a6"></i><i style="left:794px;top:498px;width:2px;height:2px;background:#bfb3a6"></i><i style="left:766px;top:526px;width:2px;height:2px;background:#bfb3a6"></i><i style="left:794px;top:526px;width:2px;height:2px;background:#bfb3a6"></i><i style="left:768px;top:500px;width:26px;height:24px;background:#fff"></i><i style="left:770px;top:502px;width:22px;height:20px;background:#c6c6c6"></i><i style="left:768px;top:524px;width:26px;height:2px;background:#7d7d7d"></i><i style="left:772px;top:508px;width:18px;height:2px;background:#000"></i><i style="left:774px;top:510px;width:14px;height:2px;background:#000"></i><i style="left:772px;top:510px;width:2px;height:2px;background:#6e6e6e"></i><i style="left:788px;top:510px;width:2px;height:2px;background:#6e6e6e"></i><i style="left:776px;top:512px;width:10px;height:2px;background:#000"></i><i style="left:774px;top:512px;width:2px;height:2px;background:#6e6e6e"></i><i style="left:786px;top:512px;width:2px;height:2px;background:#6e6e6e"></i><i style="left:778px;top:514px;width:6px;height:2px;background:#000"></i><i style="left:776px;top:514px;width:2px;height:2px;background:#6e6e6e"></i><i style="left:784px;top:514px;width:2px;height:2px;background:#6e6e6e"></i><i style="left:780px;top:516px;width:2px;height:2px;background:#000"></i><i style="left:778px;top:516px;width:2px;height:2px;background:#6e6e6e"></i><i style="left:782px;top:516px;width:2px;height:2px;background:#6e6e6e"></i></div><div class="btn"><i style="left:160px;top:538px;width:200px;height:2px;background:#000"></i><i style="left:158px;top:540px;width:2px;height:2px;background:#000"></i><i style="left:360px;top:540px;width:2px;height:2px;background:#000"></i><i style="left:156px;top:542px;width:2px;height:24px;background:#000"></i><i style="left:362px;top:542px;width:2px;height:24px;background:#000"></i><i style="left:158px;top:566px;width:2px;height:2px;background:#000"></i><i style="left:360px;top:566px;width:2px;height:2px;background:#000"></i><i style="left:160px;top:568px;width:200px;height:2px;background:#000"></i><i style="left:160px;top:570px;width:200px;height:2px;background:#a38f82"></i><i style="left:156px;top:566px;width:2px;height:2px;background:#b8a597"></i><i style="left:362px;top:566px;width:2px;height:2px;background:#b8a597"></i><i style="left:158px;top:568px;width:2px;height:2px;background:#a08878"></i><i style="left:360px;top:568px;width:2px;height:2px;background:#a08878"></i><i style="left:160px;top:540px;width:200px;height:2px;background:#fff"></i><i style="left:158px;top:542px;width:204px;height:22px;background:#fff"></i><i style="left:160px;top:564px;width:200px;height:2px;background:#fff"></i><i style="left:158px;top:564px;width:2px;height:2px;background:#8c8c8c"></i><i style="left:360px;top:564px;width:2px;height:2px;background:#8c8c8c"></i><i style="left:160px;top:566px;width:200px;height:2px;background:#7d7d7d"></i><i style="left:160px;top:542px;width:200px;height:22px;background:#c6c6c6"></i><i style="left:160px;top:542px;width:2px;height:2px;background:#fff"></i><i style="left:358px;top:542px;width:2px;height:2px;background:#fff"></i><i style="left:160px;top:562px;width:2px;height:2px;background:#fff"></i><i style="left:358px;top:562px;width:2px;height:2px;background:#fff"></i><span class="t " style="left:0;top:0;color:#000"><b style="left:209.00px;top:543px;letter-spacing:0.333px">Save</b> <b style="left:257.00px;top:543px;letter-spacing:0.400px">Preset</b></span></div><div class="btn"><i style="left:376px;top:538px;width:200px;height:2px;background:#000"></i><i style="left:374px;top:540px;width:2px;height:2px;background:#000"></i><i style="left:576px;top:540px;width:2px;height:2px;background:#000"></i><i style="left:372px;top:542px;width:2px;height:24px;background:#000"></i><i style="left:578px;top:542px;width:2px;height:24px;background:#000"></i><i style="left:374px;top:566px;width:2px;height:2px;background:#000"></i><i style="left:576px;top:566px;width:2px;height:2px;background:#000"></i><i style="left:376px;top:568px;width:200px;height:2px;background:#000"></i><i style="left:376px;top:570px;width:200px;height:2px;background:#a38f82"></i><i style="left:372px;top:566px;width:2px;height:2px;background:#b8a597"></i><i style="left:578px;top:566px;width:2px;height:2px;background:#b8a597"></i><i style="left:374px;top:568px;width:2px;height:2px;background:#a08878"></i><i style="left:576px;top:568px;width:2px;height:2px;background:#a08878"></i><i style="left:376px;top:540px;width:200px;height:2px;background:#fff"></i><i style="left:374px;top:542px;width:204px;height:22px;background:#fff"></i><i style="left:376px;top:564px;width:200px;height:2px;background:#fff"></i><i style="left:374px;top:564px;width:2px;height:2px;background:#8c8c8c"></i><i style="left:576px;top:564px;width:2px;height:2px;background:#8c8c8c"></i><i style="left:376px;top:566px;width:200px;height:2px;background:#7d7d7d"></i><i style="left:376px;top:542px;width:200px;height:22px;background:#c6c6c6"></i><i style="left:376px;top:542px;width:2px;height:2px;background:#fff"></i><i style="left:574px;top:542px;width:2px;height:2px;background:#fff"></i><i style="left:376px;top:562px;width:2px;height:2px;background:#fff"></i><i style="left:574px;top:562px;width:2px;height:2px;background:#fff"></i><span class="t " style="left:0;top:0;color:#000"><b style="left:421.00px;top:543px">Delete</b> <b style="left:479.00px;top:543px;letter-spacing:0.400px">Preset</b></span></div><div class="btn"><i style="left:592px;top:538px;width:200px;height:2px;background:#000"></i><i style="left:590px;top:540px;width:2px;height:2px;background:#000"></i><i style="left:792px;top:540px;width:2px;height:2px;background:#000"></i><i style="left:588px;top:542px;width:2px;height:24px;background:#000"></i><i style="left:794px;top:542px;width:2px;height:24px;background:#000"></i><i style="left:590px;top:566px;width:2px;height:2px;background:#000"></i><i style="left:792px;top:566px;width:2px;height:2px;background:#000"></i><i style="left:592px;top:568px;width:200px;height:2px;background:#000"></i><i style="left:592px;top:570px;width:200px;height:2px;background:#a38f82"></i><i style="left:588px;top:566px;width:2px;height:2px;background:#b8a597"></i><i style="left:794px;top:566px;width:2px;height:2px;background:#b8a597"></i><i style="left:590px;top:568px;width:2px;height:2px;background:#a08878"></i><i style="left:792px;top:568px;width:2px;height:2px;background:#a08878"></i><i style="left:592px;top:540px;width:200px;height:2px;background:#fff"></i><i style="left:590px;top:542px;width:204px;height:22px;background:#fff"></i><i style="left:592px;top:564px;width:200px;height:2px;background:#fff"></i><i style="left:590px;top:564px;width:2px;height:2px;background:#8c8c8c"></i><i style="left:792px;top:564px;width:2px;height:2px;background:#8c8c8c"></i><i style="left:592px;top:566px;width:200px;height:2px;background:#7d7d7d"></i><i style="left:592px;top:542px;width:200px;height:22px;background:#c6c6c6"></i><i style="left:592px;top:542px;width:2px;height:2px;background:#fff"></i><i style="left:790px;top:542px;width:2px;height:2px;background:#fff"></i><i style="left:592px;top:562px;width:2px;height:2px;background:#fff"></i><i style="left:790px;top:562px;width:2px;height:2px;background:#fff"></i><span class="t " style="left:673.00px;top:543px;letter-spacing:0.750px;color:#000">[&lt;-&gt;]</span></div><div class="btn"><i style="left:160px;top:580px;width:146px;height:2px;background:#000"></i><i style="left:158px;top:582px;width:2px;height:2px;background:#000"></i><i style="left:306px;top:582px;width:2px;height:2px;background:#000"></i><i style="left:156px;top:584px;width:2px;height:24px;background:#000"></i><i style="left:308px;top:584px;width:2px;height:24px;background:#000"></i><i style="left:158px;top:608px;width:2px;height:2px;background:#000"></i><i style="left:306px;top:608px;width:2px;height:2px;background:#000"></i><i style="left:160px;top:610px;width:146px;height:2px;background:#000"></i><i style="left:160px;top:612px;width:146px;height:2px;background:#a38f82"></i><i style="left:156px;top:608px;width:2px;height:2px;background:#b8a597"></i><i style="left:308px;top:608px;width:2px;height:2px;background:#b8a597"></i><i style="left:158px;top:610px;width:2px;height:2px;background:#a08878"></i><i style="left:306px;top:610px;width:2px;height:2px;background:#a08878"></i><i style="left:160px;top:582px;width:146px;height:2px;background:#fff"></i><i style="left:158px;top:584px;width:150px;height:22px;background:#fff"></i><i style="left:160px;top:606px;width:146px;height:2px;background:#fff"></i><i style="left:158px;top:606px;width:2px;height:2px;background:#8c8c8c"></i><i style="left:306px;top:606px;width:2px;height:2px;background:#8c8c8c"></i><i style="left:160px;top:608px;width:146px;height:2px;background:#7d7d7d"></i><i style="left:160px;top:584px;width:146px;height:22px;background:#c6c6c6"></i><i style="left:160px;top:584px;width:2px;height:2px;background:#fff"></i><i style="left:304px;top:584px;width:2px;height:2px;background:#fff"></i><i style="left:160px;top:604px;width:2px;height:2px;background:#fff"></i><i style="left:304px;top:604px;width:2px;height:2px;background:#fff"></i><span class="t " style="left:199.00px;top:585px;letter-spacing:0.200px;color:#000">Rename</span></div><div class="btn"><i style="left:322px;top:580px;width:146px;height:2px;background:#000"></i><i style="left:320px;top:582px;width:2px;height:2px;background:#000"></i><i style="left:468px;top:582px;width:2px;height:2px;background:#000"></i><i style="left:318px;top:584px;width:2px;height:24px;background:#000"></i><i style="left:470px;top:584px;width:2px;height:24px;background:#000"></i><i style="left:320px;top:608px;width:2px;height:2px;background:#000"></i><i style="left:468px;top:608px;width:2px;height:2px;background:#000"></i><i style="left:322px;top:610px;width:146px;height:2px;background:#000"></i><i style="left:322px;top:612px;width:146px;height:2px;background:#a38f82"></i><i style="left:318px;top:608px;width:2px;height:2px;background:#b8a597"></i><i style="left:470px;top:608px;width:2px;height:2px;background:#b8a597"></i><i style="left:320px;top:610px;width:2px;height:2px;background:#a08878"></i><i style="left:468px;top:610px;width:2px;height:2px;background:#a08878"></i><i style="left:322px;top:582px;width:146px;height:2px;background:#fff"></i><i style="left:320px;top:584px;width:150px;height:22px;background:#fff"></i><i style="left:322px;top:606px;width:146px;height:2px;background:#fff"></i><i style="left:320px;top:606px;width:2px;height:2px;background:#8c8c8c"></i><i style="left:468px;top:606px;width:2px;height:2px;background:#8c8c8c"></i><i style="left:322px;top:608px;width:146px;height:2px;background:#7d7d7d"></i><i style="left:322px;top:584px;width:146px;height:22px;background:#c6c6c6"></i><i style="left:322px;top:584px;width:2px;height:2px;background:#fff"></i><i style="left:466px;top:584px;width:2px;height:2px;background:#fff"></i><i style="left:322px;top:604px;width:2px;height:2px;background:#fff"></i><i style="left:466px;top:604px;width:2px;height:2px;background:#fff"></i><i style="left:324px;top:584px;width:142px;height:2px;background:#785848"></i><i style="left:324px;top:604px;width:142px;height:2px;background:#785848"></i><i style="left:322px;top:586px;width:2px;height:18px;background:#785848"></i><i style="left:466px;top:586px;width:2px;height:18px;background:#785848"></i><span class="t " style="left:371.02px;top:585px;transform:scaleX(0.9767);color:#000">Reset</span></div><div class="btn"><i style="left:484px;top:580px;width:146px;height:2px;background:#000"></i><i style="left:482px;top:582px;width:2px;height:2px;background:#000"></i><i style="left:630px;top:582px;width:2px;height:2px;background:#000"></i><i style="left:480px;top:584px;width:2px;height:24px;background:#000"></i><i style="left:632px;top:584px;width:2px;height:24px;background:#000"></i><i style="left:482px;top:608px;width:2px;height:2px;background:#000"></i><i style="left:630px;top:608px;width:2px;height:2px;background:#000"></i><i style="left:484px;top:610px;width:146px;height:2px;background:#000"></i><i style="left:484px;top:612px;width:146px;height:2px;background:#a38f82"></i><i style="left:480px;top:608px;width:2px;height:2px;background:#b8a597"></i><i style="left:632px;top:608px;width:2px;height:2px;background:#b8a597"></i><i style="left:482px;top:610px;width:2px;height:2px;background:#a08878"></i><i style="left:630px;top:610px;width:2px;height:2px;background:#a08878"></i><i style="left:484px;top:582px;width:146px;height:2px;background:#fff"></i><i style="left:482px;top:584px;width:150px;height:22px;background:#fff"></i><i style="left:484px;top:606px;width:146px;height:2px;background:#fff"></i><i style="left:482px;top:606px;width:2px;height:2px;background:#8c8c8c"></i><i style="left:630px;top:606px;width:2px;height:2px;background:#8c8c8c"></i><i style="left:484px;top:608px;width:146px;height:2px;background:#7d7d7d"></i><i style="left:484px;top:584px;width:146px;height:22px;background:#c6c6c6"></i><i style="left:484px;top:584px;width:2px;height:2px;background:#fff"></i><i style="left:628px;top:584px;width:2px;height:2px;background:#fff"></i><i style="left:484px;top:604px;width:2px;height:2px;background:#fff"></i><i style="left:628px;top:604px;width:2px;height:2px;background:#fff"></i><span class="t " style="left:0;top:0;color:#000"><b style="left:520.00px;top:585px;transform:scaleX(0.8421)">As</b> <b style="left:545.00px;top:585px;letter-spacing:0.250px">Brush</b></span></div><div class="btn"><i style="left:646px;top:580px;width:146px;height:2px;background:#000"></i><i style="left:644px;top:582px;width:2px;height:2px;background:#000"></i><i style="left:792px;top:582px;width:2px;height:2px;background:#000"></i><i style="left:642px;top:584px;width:2px;height:24px;background:#000"></i><i style="left:794px;top:584px;width:2px;height:24px;background:#000"></i><i style="left:644px;top:608px;width:2px;height:2px;background:#000"></i><i style="left:792px;top:608px;width:2px;height:2px;background:#000"></i><i style="left:646px;top:610px;width:146px;height:2px;background:#000"></i><i style="left:646px;top:612px;width:146px;height:2px;background:#a38f82"></i><i style="left:642px;top:608px;width:2px;height:2px;background:#b8a597"></i><i style="left:794px;top:608px;width:2px;height:2px;background:#b8a597"></i><i style="left:644px;top:610px;width:2px;height:2px;background:#a08878"></i><i style="left:792px;top:610px;width:2px;height:2px;background:#a08878"></i><i style="left:646px;top:582px;width:146px;height:2px;background:#fff"></i><i style="left:644px;top:584px;width:150px;height:22px;background:#fff"></i><i style="left:646px;top:606px;width:146px;height:2px;background:#fff"></i><i style="left:644px;top:606px;width:2px;height:2px;background:#8c8c8c"></i><i style="left:792px;top:606px;width:2px;height:2px;background:#8c8c8c"></i><i style="left:646px;top:608px;width:146px;height:2px;background:#7d7d7d"></i><i style="left:646px;top:584px;width:146px;height:22px;background:#c6c6c6"></i><i style="left:646px;top:584px;width:2px;height:2px;background:#fff"></i><i style="left:790px;top:584px;width:2px;height:2px;background:#fff"></i><i style="left:646px;top:604px;width:2px;height:2px;background:#fff"></i><i style="left:790px;top:604px;width:2px;height:2px;background:#fff"></i><span class="t " style="left:707.00px;top:585px;letter-spacing:2.500px;color:#000">[?]</span></div><div class="btn"><i style="left:160px;top:622px;width:308px;height:2px;background:#000"></i><i style="left:158px;top:624px;width:2px;height:2px;background:#000"></i><i style="left:468px;top:624px;width:2px;height:2px;background:#000"></i><i style="left:156px;top:626px;width:2px;height:24px;background:#000"></i><i style="left:470px;top:626px;width:2px;height:24px;background:#000"></i><i style="left:158px;top:650px;width:2px;height:2px;background:#000"></i><i style="left:468px;top:650px;width:2px;height:2px;background:#000"></i><i style="left:160px;top:652px;width:308px;height:2px;background:#000"></i><i style="left:160px;top:654px;width:308px;height:2px;background:#a38f82"></i><i style="left:156px;top:650px;width:2px;height:2px;background:#b8a597"></i><i style="left:470px;top:650px;width:2px;height:2px;background:#b8a597"></i><i style="left:158px;top:652px;width:2px;height:2px;background:#a08878"></i><i style="left:468px;top:652px;width:2px;height:2px;background:#a08878"></i><i style="left:160px;top:624px;width:308px;height:2px;background:#fff"></i><i style="left:158px;top:626px;width:312px;height:22px;background:#fff"></i><i style="left:160px;top:648px;width:308px;height:2px;background:#fff"></i><i style="left:158px;top:648px;width:2px;height:2px;background:#8c8c8c"></i><i style="left:468px;top:648px;width:2px;height:2px;background:#8c8c8c"></i><i style="left:160px;top:650px;width:308px;height:2px;background:#7d7d7d"></i><i style="left:160px;top:626px;width:308px;height:22px;background:#c6c6c6"></i><i style="left:160px;top:626px;width:2px;height:2px;background:#fff"></i><i style="left:466px;top:626px;width:2px;height:2px;background:#fff"></i><i style="left:160px;top:646px;width:2px;height:2px;background:#fff"></i><i style="left:466px;top:646px;width:2px;height:2px;background:#fff"></i><span class="t " style="left:0;top:0;color:#000"><b style="left:201.00px;top:627px;letter-spacing:0.667px">Load</b> <b style="left:249.00px;top:627px;letter-spacing:0.600px">Params</b> <b style="left:319.00px;top:627px;letter-spacing:1.500px">(from</b> <b style="left:373.00px;top:627px;letter-spacing:0.750px">Name)</b></span></div><div class="btn"><i style="left:484px;top:622px;width:308px;height:2px;background:#000"></i><i style="left:482px;top:624px;width:2px;height:2px;background:#000"></i><i style="left:792px;top:624px;width:2px;height:2px;background:#000"></i><i style="left:480px;top:626px;width:2px;height:24px;background:#000"></i><i style="left:794px;top:626px;width:2px;height:24px;background:#000"></i><i style="left:482px;top:650px;width:2px;height:2px;background:#000"></i><i style="left:792px;top:650px;width:2px;height:2px;background:#000"></i><i style="left:484px;top:652px;width:308px;height:2px;background:#000"></i><i style="left:484px;top:654px;width:308px;height:2px;background:#a38f82"></i><i style="left:480px;top:650px;width:2px;height:2px;background:#b8a597"></i><i style="left:794px;top:650px;width:2px;height:2px;background:#b8a597"></i><i style="left:482px;top:652px;width:2px;height:2px;background:#a08878"></i><i style="left:792px;top:652px;width:2px;height:2px;background:#a08878"></i><i style="left:484px;top:624px;width:308px;height:2px;background:#fff"></i><i style="left:482px;top:626px;width:312px;height:22px;background:#fff"></i><i style="left:484px;top:648px;width:308px;height:2px;background:#fff"></i><i style="left:482px;top:648px;width:2px;height:2px;background:#8c8c8c"></i><i style="left:792px;top:648px;width:2px;height:2px;background:#8c8c8c"></i><i style="left:484px;top:650px;width:308px;height:2px;background:#7d7d7d"></i><i style="left:484px;top:626px;width:308px;height:22px;background:#c6c6c6"></i><i style="left:484px;top:626px;width:2px;height:2px;background:#fff"></i><i style="left:790px;top:626px;width:2px;height:2px;background:#fff"></i><i style="left:484px;top:646px;width:2px;height:2px;background:#fff"></i><i style="left:790px;top:646px;width:2px;height:2px;background:#fff"></i><span class="t " style="left:0;top:0;color:#000"><b style="left:595.00px;top:627px;letter-spacing:0.333px">Save</b> <b style="left:643.00px;top:627px;letter-spacing:0.750px">Strip</b></span></div>
</div></body></html>
